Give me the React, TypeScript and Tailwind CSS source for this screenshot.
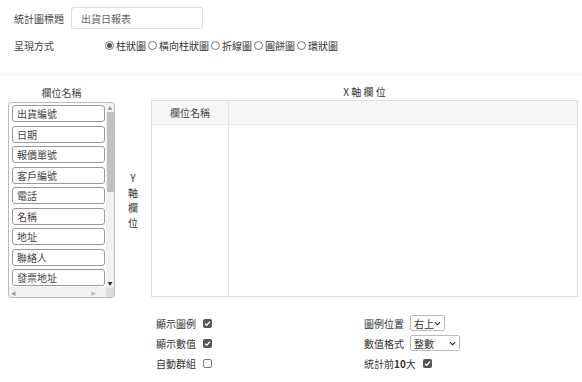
import React from 'react'

const fields = ['出貨編號', '日期', '報價單號', '客戶編號', '電話', '名稱', '地址', '聯絡人', '發票地址']
const chartTypes = ['柱狀圖', '橫向柱狀圖', '折線圖', '圓餅圖', '環狀圖']

function Radio({ checked }: { checked?: boolean }) {
  return (
    <span className="w-[9px] h-[9px] rounded-full border border-[#777] bg-white flex items-center justify-center mr-[2px]">
      {checked && <span className="w-[5px] h-[5px] rounded-full bg-[#555]" />}
    </span>
  )
}

function Check({ checked }: { checked?: boolean }) {
  return checked ? (
    <span className="w-[9px] h-[9px] rounded-[2px] bg-[#555] flex items-center justify-center">
      <svg width="7" height="7" viewBox="0 0 8 8">
        <path d="M1.3 4.2 L3.2 6 L6.8 1.8" stroke="white" strokeWidth="1.5" fill="none" />
      </svg>
    </span>
  ) : (
    <span className="w-[9px] h-[9px] rounded-[2px] border border-[#777] bg-white" />
  )
}

function Select({ value, width }: { value: string; width: string }) {
  return (
    <div className={`${width} h-[16px] border border-[#bbb] rounded-[2px] flex items-center justify-between pl-[3px] pr-[3px] bg-white`}>
      <span>{value}</span>
      <svg width="7" height="5" viewBox="0 0 8 5">
        <path d="M1 1 L4 4 L7 1" stroke="#222" strokeWidth="1.3" fill="none" />
      </svg>
    </div>
  )
}

export default function App() {
  return (
    <div
      className="w-[582px] h-[382px] bg-white text-[10px] text-[#444] overflow-hidden"
      style={{ fontFamily: '"Noto Sans CJK TC", "Liberation Sans", sans-serif' }}
    >
      {/* top settings */}
      <div className="h-[75px] border-b border-[#eee] pl-[14px] pt-[7px]">
        <div className="flex items-center h-[22px]">
          <span className="w-[57px]">統計圖標題</span>
          <div className="w-[132px] h-[22px] border border-[#ddd] rounded-[3px] flex items-center pl-[9px] text-[#666]">
            出貨日報表
          </div>
        </div>
        <div className="flex items-center mt-[7px] h-[18px]">
          <span className="w-[91px]">呈現方式</span>
          {chartTypes.map((t, i) => (
            <span key={t} className="flex items-center mr-[2px] text-[#333]">
              <Radio checked={i === 0} />
              {t}
            </span>
          ))}
        </div>
      </div>

      {/* fields area */}
      <div className="flex pt-[11px]">
        <div className="ml-[8px] w-[107px]">
          <div className="text-center h-[16px] leading-[14px]">欄位名稱</div>
          <div className="h-[196px] border border-[#bbb] rounded-[3px] flex flex-col overflow-hidden">
            <div className="flex flex-1">
              <div className="flex-1 flex flex-col gap-[3.5px] pl-[3px] pt-[2px] pr-[1px]">
                {fields.map((f) => (
                  <div
                    key={f}
                    className="h-[17px] border border-[#999] rounded-[3px] pl-[4px] flex items-center bg-white"
                  >
                    {f}
                  </div>
                ))}
              </div>
              <div className="w-[8px] bg-[#f1f1f1] flex flex-col items-center">
                <span className="text-[5px] leading-[9px] text-[#999]">▲</span>
                <div className="w-[7px] h-[80px] bg-[#c1c1c1]" />
                <div className="flex-1" />
                <span className="text-[5px] leading-[9px] text-[#333]">▼</span>
              </div>
            </div>
            <div className="h-[10px] bg-[#f1f1f1] flex items-center border-t border-[#eee]">
              <span className="text-[5px] text-[#999] ml-[2px]">◀</span>
              <div className="flex-1" />
              <span className="text-[5px] text-[#bbb] mr-[10px]">▶</span>
              <div className="w-[8px] h-[10px] bg-[#dcdcdc]" />
            </div>
          </div>
        </div>

        <div className="w-[36px] flex flex-col items-center justify-center pt-[16px] leading-[15px] text-[#333]">
          <span>Y</span>
          <span>軸</span>
          <span>欄</span>
          <span>位</span>
        </div>

        <div className="w-[427px]">
          <div className="text-center h-[14px] leading-[12px] text-[#333]">X 軸 欄 位</div>
          <div className="h-[197px] border border-[#ddd] flex">
            <div className="w-[77px] border-r border-[#e4e4e4] flex flex-col">
              <div className="h-[24px] bg-[#f6f6f6] border-b border-[#e8e8e8] flex items-center justify-center">
                欄位名稱
              </div>
            </div>
            <div className="flex-1 flex flex-col">
              <div className="h-[24px] bg-[#f6f6f6] border-b border-[#e8e8e8]" />
            </div>
          </div>
        </div>
      </div>

      {/* bottom options */}
      <div className="flex mt-[15px] text-[#333]">
        <div className="ml-[156px] w-[208px] flex flex-col">
          <div className="h-[20px] flex items-center gap-[7px]">
            <span>顯示圖例</span>
            <Check checked />
          </div>
          <div className="h-[20px] flex items-center gap-[7px]">
            <span>顯示數值</span>
            <Check checked />
          </div>
          <div className="h-[20px] flex items-center gap-[7px]">
            <span>自動群組</span>
            <Check />
          </div>
        </div>
        <div className="flex flex-col">
          <div className="h-[20px] flex items-center gap-[6px]">
            <span>圖例位置</span>
            <Select value="右上" width="w-[35px]" />
          </div>
          <div className="h-[20px] flex items-center gap-[6px]">
            <span>數值格式</span>
            <Select value="整數" width="w-[50px]" />
          </div>
          <div className="h-[20px] flex items-center gap-[7px]">
            <span>
              統計前<span className="font-bold">10</span>大
            </span>
            <Check checked />
          </div>
        </div>
      </div>
    </div>
  )
}
